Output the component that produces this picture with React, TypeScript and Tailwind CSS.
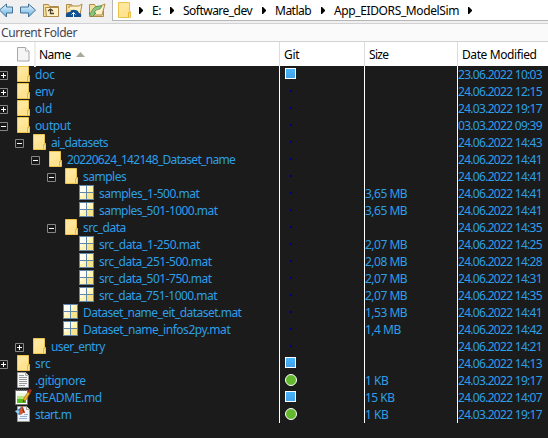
import React from "react";

type Kind = "folder" | "mat" | "page" | "readme" | "script";
type Git = "square" | "circle" | "dot";
type Item = {
  name: string;
  level: number;
  kind: Kind;
  state?: "open" | "closed";
  git: Git;
  size?: string;
  date: string;
  track: string;
};

const items: Item[] = [
  { name: "doc", level: 0, kind: "folder", state: "closed", git: "square", date: "23.06.2022 10:03", track: "tracking-[-0.2px]" },
  { name: "env", level: 0, kind: "folder", state: "closed", git: "dot", date: "24.06.2022 12:15", track: "tracking-[-0.5px]" },
  { name: "old", level: 0, kind: "folder", state: "closed", git: "dot", date: "24.03.2022 19:17", track: "tracking-[-0.2px]" },
  { name: "output", level: 0, kind: "folder", state: "open", git: "dot", date: "03.03.2022 09:39", track: "tracking-[-0.4px]" },
  { name: "ai_datasets", level: 1, kind: "folder", state: "open", git: "dot", date: "24.06.2022 14:43", track: "tracking-[-0.55px]" },
  { name: "20220624_142148_Dataset_name", level: 2, kind: "folder", state: "open", git: "dot", date: "24.06.2022 14:41", track: "tracking-[-0.7px]" },
  { name: "samples", level: 3, kind: "folder", state: "open", git: "dot", date: "24.06.2022 14:41", track: "tracking-[-0.5px]" },
  { name: "samples_1-500.mat", level: 4, kind: "mat", git: "dot", size: "3,65 MB", date: "24.06.2022 14:41", track: "tracking-[-0.5px]" },
  { name: "samples_501-1000.mat", level: 4, kind: "mat", git: "dot", size: "3,65 MB", date: "24.06.2022 14:41", track: "tracking-[-0.55px]" },
  { name: "src_data", level: 3, kind: "folder", state: "open", git: "dot", date: "24.06.2022 14:35", track: "tracking-[-0.5px]" },
  { name: "src_data_1-250.mat", level: 4, kind: "mat", git: "dot", size: "2,07 MB", date: "24.06.2022 14:25", track: "tracking-[-0.45px]" },
  { name: "src_data_251-500.mat", level: 4, kind: "mat", git: "dot", size: "2,08 MB", date: "24.06.2022 14:28", track: "tracking-[-0.5px]" },
  { name: "src_data_501-750.mat", level: 4, kind: "mat", git: "dot", size: "2,07 MB", date: "24.06.2022 14:31", track: "tracking-[-0.5px]" },
  { name: "src_data_751-1000.mat", level: 4, kind: "mat", git: "dot", size: "2,07 MB", date: "24.06.2022 14:35", track: "tracking-[-0.55px]" },
  { name: "Dataset_name_eit_dataset.mat", level: 3, kind: "mat", git: "dot", size: "1,53 MB", date: "24.06.2022 14:41", track: "tracking-[-0.53px]" },
  { name: "Dataset_name_infos2py.mat", level: 3, kind: "mat", git: "dot", size: "1,4 MB", date: "24.06.2022 14:42", track: "tracking-[-0.47px]" },
  { name: "user_entry", level: 1, kind: "folder", state: "closed", git: "dot", date: "24.06.2022 14:21", track: "tracking-[-0.6px]" },
  { name: "src", level: 0, kind: "folder", state: "closed", git: "square", date: "24.06.2022 14:13", track: "tracking-[-0.2px]" },
  { name: ".gitignore", level: 0, kind: "page", git: "circle", size: "1 KB", date: "24.03.2022 19:17", track: "tracking-[-0.4px]" },
  { name: "README.md", level: 0, kind: "readme", git: "square", size: "15 KB", date: "24.06.2022 14:07", track: "tracking-[-0.35px]" },
  { name: "start.m", level: 0, kind: "script", git: "circle", size: "1 KB", date: "24.03.2022 19:17", track: "tracking-[-0.6px]" },
];

const indents = ["w-0", "w-4", "w-8", "w-12", "w-16"];

function Folder() {
  return (
    <svg width="16" height="16" viewBox="0 0 16 16" className="shrink-0">
      <path d="M2.5.5h11v9h1v6h-12z" fill="#ffe391" stroke="#edc44b" />
      <path d="M3 1h10v4L3 11z" fill="#ffeaa5" opacity=".6" />
      <path d="M12.5 15v-4.5h1.5" fill="none" stroke="#e5b936" />
    </svg>
  );
}

function FileIcon({ kind }: { kind: Kind }) {
  if (kind === "folder") return <Folder />;
  if (kind === "mat")
    return (
      <svg width="16" height="16" viewBox="0 0 16 16" className="shrink-0">
        <path d="M0 0h15v15H0z" fill="#6387ab" />
        <path d="M1 1h6v6H1z" fill="#fffef5" />
        <path d="M8 1h6v6H8zM1 8h6v6H1z" fill="#fff4b0" />
        <path d="M8 8h6v6H8z" fill="#f6e38b" />
        <path d="M8 1h3v3H8zM1 8h3v3H1z" fill="#fffbdc" />
      </svg>
    );
  if (kind === "page")
    return (
      <svg width="16" height="16" viewBox="0 0 16 16" className="shrink-0">
        <path d="M2.5.5h8l3 3v12h-11z" fill="#f6f6f6" stroke="#9c9c9c" />
        <path d="M10.5.5v3h3" fill="#ddd" stroke="#aaa" />
        <path d="M4 3.5h5M4 5.5h8M4 7.5h8M4 9.5h8M4 11.5h8M4 13.5h6" stroke="#999" />
      </svg>
    );
  if (kind === "readme")
    return (
      <svg width="16" height="16" viewBox="0 0 16 16" className="shrink-0 overflow-visible">
        <path d="M.5 1.5h12v14H.5z" fill="#fff" stroke="#777" />
        <path d="M2 4h9v3H2z" fill="#edf7df" />
        <path d="M2 7h9v3H2z" fill="#b8e581" />
        <path d="M2 10h9v4H2z" fill="#58bc1d" />
        <path d="M2.5 0v3M4.5 0v3M6.5 0v3M8.5 0v3M10.5 0v3" stroke="#555" strokeDasharray="2 1" />
        <path d="m8 13 1-4 4-6 2 1-4 7z" fill="#f3b526" stroke="#a66a16" strokeWidth=".7" />
        <path d="m13 2 1-2 3 1-2 4z" fill="#b42b22" />
        <path d="m8 13 .5-2 1.5 1z" fill="#222" />
      </svg>
    );
  return (
    <svg width="16" height="16" viewBox="0 0 16 16" className="shrink-0 overflow-visible">
      <path d="M2.5.5h9l3 3v12h-12z" fill="#eef5ff" stroke="#9a9a8f" />
      <path d="M11.5.5v3h3" fill="#fff" stroke="#a9a593" />
      <path d="M9 8.500h4M5 10.500h7M4 12.500h8" stroke="#9bb0cf" />
      <path d="m0 5 4-2 3-3 1 7-4 2z" fill="#2e70b2" />
      <path d="m0 5 3-1 2 2-2 2z" fill="#8fd5ed" />
      <path d="M4 7Q6 0 7 0q1 0 3 7-2-1-4 2z" fill="#d8572a" />
      <path d="m7 0 3 7-2-1z" fill="#8f251c" />
    </svg>
  );
}

function Expander({ state }: { state?: "open" | "closed" }) {
  return (
    <div className="h-[17px] w-[16px] shrink-0">
      {state && (
        <svg width="9" height="9" viewBox="0 0 9 9" className="-ml-px mt-[5px]">
          <path d="M.5.5h8v8h-8z" fill="#171717" stroke="#858585" />
          <path d="M2 4.5h5" stroke="#fff" />
          {state === "closed" && <path d="M4.5 2v5" stroke="#fff" />}
        </svg>
      )}
    </div>
  );
}

function GitMark({ git }: { git: Git }) {
  if (git === "square")
    return <div className="ml-[5px] mt-[2px] size-[11px] border border-white bg-linear-to-b from-[#4ab5fb] to-[#41a1e8]" />;
  if (git === "circle")
    return <div className="ml-[5px] mt-[2px] size-[12px] rounded-full border border-white bg-[#62b92d]" />;
  return <div className="ml-[10px] mt-[7px] size-[2px] bg-[#000087]" />;
}

function Chevron({ className }: { className: string }) {
  return (
    <svg width="4" height="7" viewBox="0 0 4 7" className={`shrink-0 ${className}`}>
      <path d="M0 0h1l3 3v1L1 7H0z" fill="#000" />
    </svg>
  );
}

function Toolbar() {
  return (
    <div className="flex h-[21px] bg-[#f0f0f0]">
      <svg width="112" height="20" viewBox="0 0 112 20" className="shrink-0">
        <defs>
          <linearGradient id="blue" x2="0" y2="1">
            <stop stopColor="#e7f6ff" />
            <stop offset="1" stopColor="#62b1e0" />
          </linearGradient>
        </defs>
        <path d="M-.5 10 6.500 4v3h6v6h-6v4z" fill="url(#blue)" stroke="#436f94" />
        <path d="M35.5 10 28.500 4v3h-8v6h8v4z" fill="url(#blue)" stroke="#436f94" />
        <g fill="#f6dda0" stroke="#b08b45">
          <path d="M43.5 16.5v-12h5l1 2h9v10z" />
          <path d="M66.5 16.5v-12h5l1 2h8v10z" />
          <path d="M89.5 16.5v-12h5l1 2h8v10z" />
        </g>
        <path d="m45.500 7.500h13v9h-12z" fill="#fff1c8" stroke="#b08b45" />
        <path d="M54 13.500h-3.500v-4M48 11l2.500-2 2.500 2" fill="none" stroke="#4b402d" strokeWidth="1.3" />
        <path d="M69 8V6h10l3-2-2 11" fill="#fff1c8" stroke="#b08b45" />
        <path d="M66 17q-1-5 4-5 1-3 5-2 3 0 4 3 3 0 2 4z" fill="#10508c" />
        <path d="M73.5 17v-4M71.5 14.5l2-2 2 2" fill="none" stroke="#fff" />
        <path d="m93 15 3-7 9-4-3 11z" fill="#fff1c8" stroke="#b08b45" />
        <path d="m89 13 3 4 4-4h-2q1-4 6-4l2-3q-9-1-11 7z" fill="#8cc77c" stroke="#3d864b" strokeWidth=".7" />
      </svg>
      <div className="flex h-[21px] grow items-center border-b border-l border-[#b6b6b6] bg-white pl-[3px] text-black">
        <Folder />
        <Chevron className="ml-[7px]" />
        <span className="ml-[9px] w-[8px] tracking-[-0.5px]">E:</span>
        <Chevron className="ml-[10px]" />
        <span className="ml-[9px] w-[70px] tracking-[-0.52px]">Software_dev</span>
        <Chevron className="ml-[9px]" />
        <span className="ml-[9px] w-[37px] tracking-[-0.5px]">Matlab</span>
        <Chevron className="ml-[9px]" />
        <span className="ml-[9px] w-[125px] tracking-[-0.38px]">App_EIDORS_ModelSim</span>
        <Chevron className="ml-[9px]" />
      </div>
    </div>
  );
}

export default function App() {
  return (
    <div className="h-[438px] w-[548px] overflow-hidden whitespace-nowrap bg-[#1b1b1b] font-['Noto_Sans','Open_Sans',sans-serif] text-[12px] leading-[17px]">
      <Toolbar />
      <div className="h-[2px] bg-[#f0f0f0]" />
      <div className="h-[19px] border-y border-[#d2d2d2] bg-[#fafafa] pl-px text-[#454557] tracking-[-0.43px]">Current Folder</div>
      <div className="grid h-[24px] grid-cols-[279px_85px_93px_91px] bg-white leading-[25px] text-black">
        <div className="flex">
          <svg width="13" height="15" viewBox="0 0 13 15" className="ml-[17px] mt-[5px]">
            <path d="M.5.5h8l3.500 3.500v10H.5z" fill="#f5f5f5" stroke="#a6a6a6" />
            <path d="M8.5.5V4H12" fill="#fff" stroke="#b0b0b0" />
          </svg>
          <div className="ml-[4px] w-[2px] bg-[#eee]" />
          <span className="ml-[3px] w-[34px] tracking-[-0.5px]">Name</span>
          <svg width="9" height="5" viewBox="0 0 9 5" className="ml-[3px] mt-[10px]">
            <path d="m0 5 4.500-5L9 5z" fill="#aaa999" />
          </svg>
        </div>
        <div className="border-l border-[#ddd] pl-[4px] tracking-[-0.3px]">Git</div>
        <div className="border-l border-[#ddd] pl-[4px] tracking-[-0.7px]">Size</div>
        <div className="border-l border-[#ddd] pl-[4px] tracking-[-0.4px]">Date Modified</div>
      </div>
      {items.map((item) => (
        <div key={item.name} className="grid h-[17px] grid-cols-[279px_85px_93px_91px] text-[#2d9fe8]">
          <div className="flex overflow-hidden">
            <div className={`shrink-0 ${indents[item.level]}`} />
            <Expander state={item.state} />
            <div className="-ml-px flex w-[20px] shrink-0">
              <FileIcon kind={item.kind} />
            </div>
            <span className={item.track}>{item.name}</span>
          </div>
          <div className="border-l border-white"><GitMark git={item.git} /></div>
          <div className="border-l border-white tracking-[-0.5px]">{item.size}</div>
          <div className="border-l border-white tracking-[-0.7px]">{item.date}</div>
        </div>
      ))}
    </div>
  );
}
